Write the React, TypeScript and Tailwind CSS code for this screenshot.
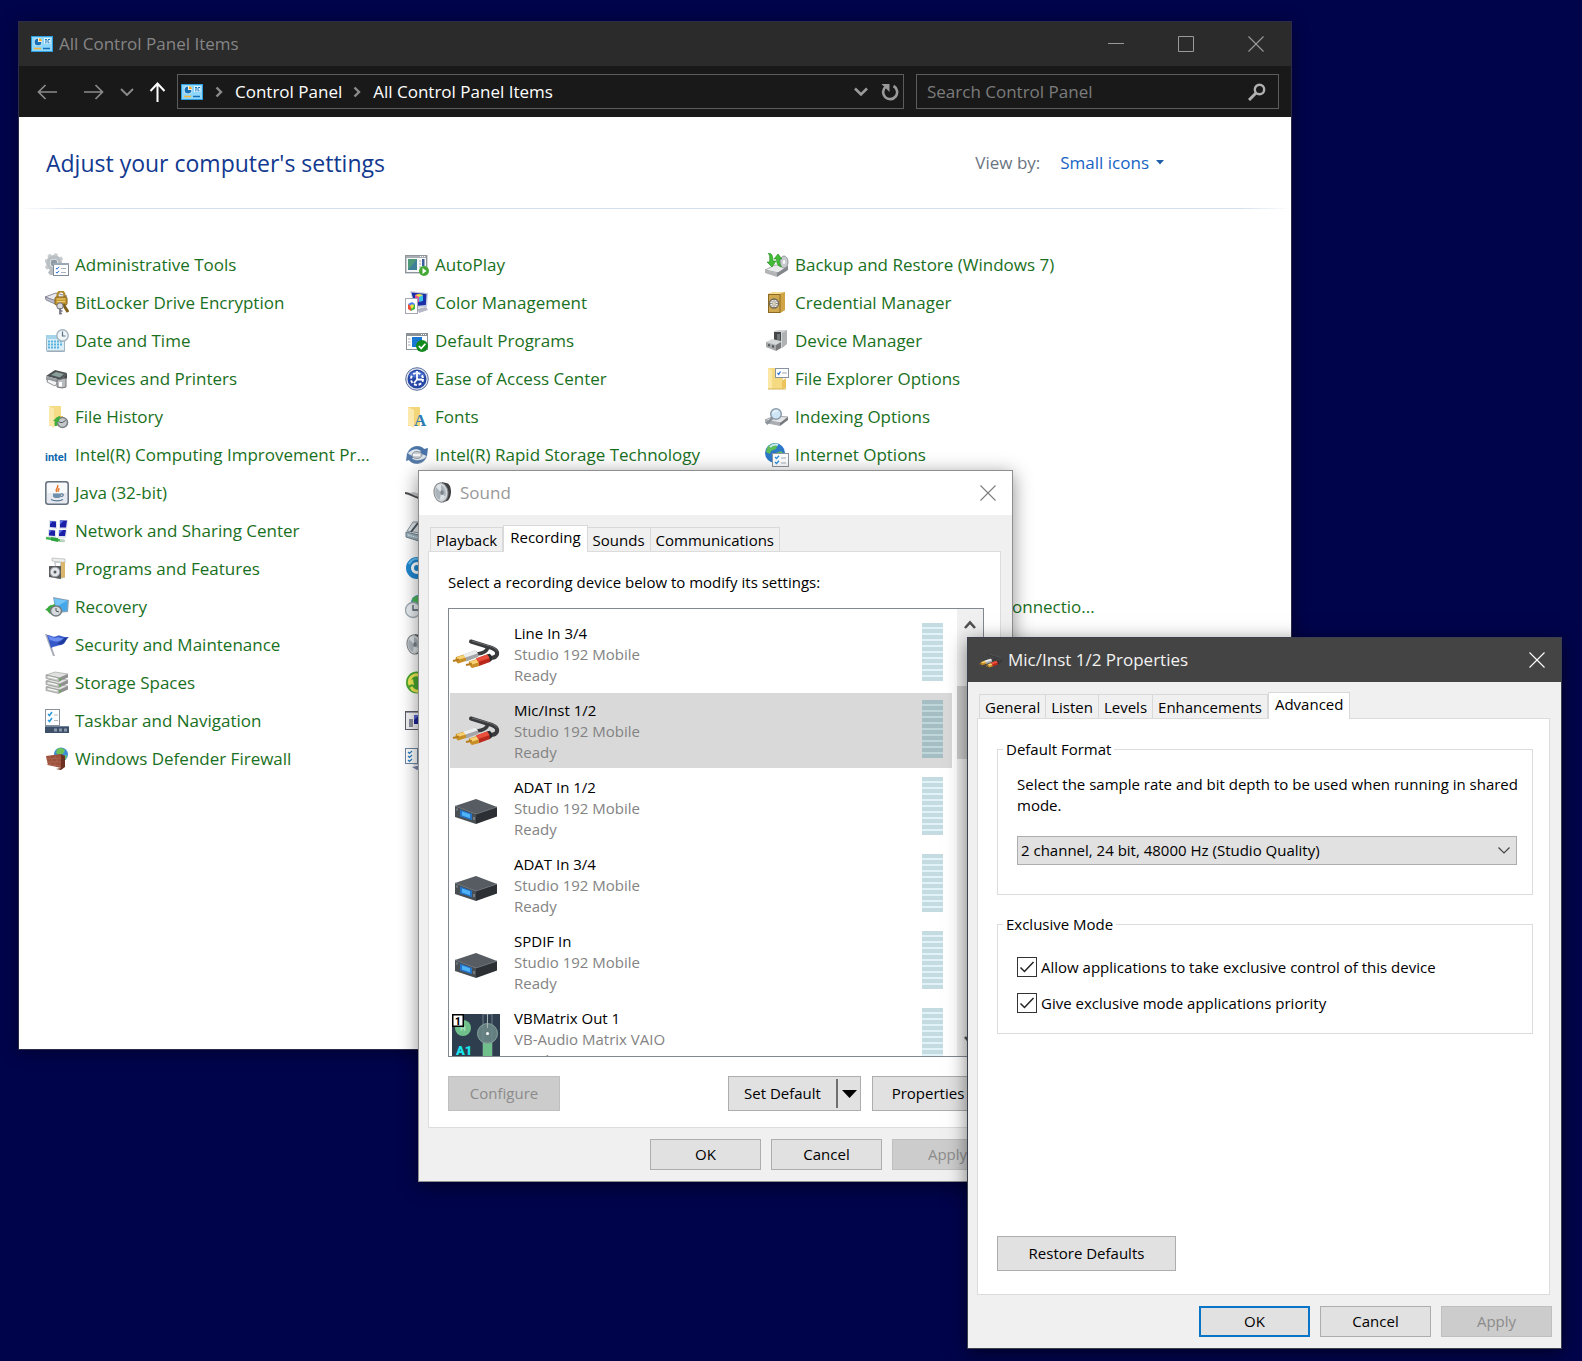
import React from 'react';
import type { ReactNode } from 'react';

/* ------------------------------------------------------------------ */
/* Icons                                                               */
/* ------------------------------------------------------------------ */

function Svg({ children, size = 24 }: { children: ReactNode; size?: number }) {
  return (
    <svg width={size} height={size} viewBox={`0 0 ${size} ${size}`} fill="none" aria-hidden="true" className="shrink-0">
      {children}
    </svg>
  );
}

const AdminTools = () => (
  <Svg>
    <circle cx="9" cy="10" r="6" stroke="#b9bfc3" strokeWidth="4" />
    <circle cx="9" cy="10" r="8.6" stroke="#c6cbce" strokeWidth="2.4" strokeDasharray="3.4 3.35" />
    <circle cx="9" cy="10" r="3.4" fill="#8f9ba4" />
    <path d="M10.500 17.500l-4-3-3.500 5 2 2.500h4z" fill="#b6bcc0" />
    <rect x="8.500" y="10.500" width="15" height="12" fill="#fff" stroke="#7f8c99" />
    <rect x="8" y="10" width="16" height="2" fill="#9aa7b4" />
    <path d="M11 15l1 1.200 2-2.400M11 19l1 1.200 2-2.400" stroke="#2e73d6" />
    <path d="M16 15.500h5M16 19.500h5" stroke="#a9b3bd" />
  </Svg>
);

const BitLocker = () => (
  <Svg>
    <path d="M0 6l11-4 11 3-9 6z" fill="#e9e9ee" stroke="#8b8b99" />
    <path d="M0 6l12 4v4L1 9z" fill="#b9bac7" stroke="#77778a" strokeWidth=".7" />
    <path d="M12.500 7V4a3.500 3.500 0 0 1 7 0v3" stroke="#b08a2a" strokeWidth="2.200" />
    <rect x="10" y="6" width="12" height="8" rx="1.500" fill="#c79a33" stroke="#7d5a14" />
    <path d="M12 8h8M12 10.500h8" stroke="#eccd75" />
    <path d="M18 13l5 8" stroke="#7d5e18" strokeWidth="3" />
    <circle cx="15" cy="15" r="3.200" fill="#d9d9dc" stroke="#6e6e78" />
    <path d="M15 17v6.500M15 20h2.500M15 22.500h2" stroke="#73737d" strokeWidth="1.700" />
  </Svg>
);

const DateTime = () => (
  <Svg>
    <rect x="1.500" y="6.500" width="18" height="16" rx="1" fill="#d9eef8" stroke="#9fb6c4" />
    <rect x="1" y="6" width="18" height="4" fill="#a4d3ea" />
    <path d="M3 12.500h14M3 15.500h14M3 18.500h11" stroke="#5ab2dc" strokeWidth="2" strokeDasharray="2 1" />
    <path d="M20 22h-18" stroke="#97a5ad" />
    <circle cx="17.500" cy="6.500" r="5.700" fill="#eef4f8" stroke="#a3b1bd" strokeWidth="1.400" />
    <path d="M17.500 2.500v4.500h3" stroke="#5c7080" strokeWidth="1.200" />
  </Svg>
);

const Printers = () => (
  <Svg>
    <path d="M1 9l9-6 12 3-6 7z" fill="#4d5154" />
    <path d="M6 8l5-3 8 2-4 3.500z" fill="#8a9f99" />
    <path d="M1 9l15 4v5L1 13z" fill="#9da1a5" />
    <path d="M16 13l6-7v5l-6 7z" fill="#44474a" />
    <path d="M3 12l10 3-3 4-8-4z" fill="#f3f4f5" stroke="#7a7d80" strokeWidth=".8" />
    <path d="M12 13l9-2v9l-4 1-5-1z" fill="#b9bcbf" stroke="#66686b" strokeWidth=".9" />
    <rect x="14" y="15" width="3" height="4.500" fill="#fff" />
  </Svg>
);

const FileHistory = () => (
  <Svg>
    <path d="M4 1h12v20H4z" fill="#f6dc86" />
    <path d="M4 1l5 3v19l-5-3z" fill="#fbe9ab" />
    <path d="M14 11h4v8h-4z" fill="#e3be55" />
    <circle cx="17.500" cy="17.500" r="5" fill="#c4c8cb" stroke="#7d8286" strokeWidth="1.600" />
    <path d="M17.500 17.500l3-2M17.500 17.500h-3" stroke="#54595e" />
    <path d="M11 21a8 8 0 0 1 4-9" stroke="#3eae3e" strokeWidth="2.600" />
    <path d="M8 16l4-4 3 5z" fill="#3eae3e" />
  </Svg>
);

const Intel = () => (
  <Svg>
    <text x="0" y="18" fontSize="11" fontWeight="700" fill="#0b67ad" fontFamily="Roboto, 'Liberation Sans', sans-serif">
      intel
    </text>
  </Svg>
);

const Java = () => (
  <Svg>
    <rect x=".8" y=".8" width="22.400" height="22.400" rx="2.500" fill="#e6eaf0" stroke="#65717f" strokeWidth="1.500" />
    <rect x="2" y="2" width="20" height="10" rx="1.500" fill="#f8f9fb" />
    <path d="M12.500 4c2 2.200-3 3.400-.800 7M14.500 7.500c-2 1-1.500 2-1 3.300" stroke="#e8782c" strokeWidth="1.500" />
    <path d="M8 12.500h8v2.500c0 1.500-1.500 2-4 2s-4-.500-4-2z" fill="#6f8fab" />
    <path d="M16 13c3-.500 3 2 0 2.500M6 18.500c3 1.800 9 1.800 12 0" stroke="#55768f" strokeWidth="1.200" />
  </Svg>
);

const Network = () => (
  <Svg>
    <path d="M4 1l8 1v8l-8-1zM14 1l9 0-1 9h-8z" fill="#dfe3ec" />
    <path d="M5 2l6 .500v6L5 8zM15 1.500h7l-1 7h-6z" fill="#1b1fa8" />
    <path d="M3 10l8 1v8l-8-1zM13 11h9l-1 8h-8z" fill="#dfe3ec" />
    <path d="M4 11l6 .500v5.500l-6-.500zM14 11h7l-1 6h-6z" fill="#1b1fa8" />
    <path d="M5 2l3 .200-3 3zM15 1.500h4l-4 4zM4 11l3 .200-3 3zM14 11h4l-4 4z" fill="#5a6ee0" />
    <path d="M1 19l18 3" stroke="#48b553" strokeWidth="2.600" />
    <path d="M6 18l7 1v4l-7-1.500z" fill="#2fa040" />
    <path d="M15 21l5 1" stroke="#c9d5cc" strokeWidth="2.600" />
  </Svg>
);

const Programs = () => (
  <Svg>
    <path d="M7 1l13 1v4l-13-2z" fill="#eceded" stroke="#aaacad" strokeWidth=".6" />
    <path d="M9 4l11 1v16l-8 1z" fill="#c9cccd" />
    <path d="M16 5h4v15l-4 1z" fill="#d9b66b" />
    <path d="M11 6h4v5h-4z" fill="#fff" />
    <path d="M4 9h12v13L4 20z" fill="#57595b" />
    <circle cx="10" cy="15" r="4.800" fill="#e3e6ea" stroke="#9b9fa4" />
    <circle cx="10" cy="15" r="1.500" fill="#57595b" />
  </Svg>
);

const Recovery = () => (
  <Svg>
    <path d="M8 2l16 3-1 12-12 1z" fill="#8ba3b4" />
    <path d="M9 3.500l13.500 2.300-.500 10-11 1z" fill="#43a7ea" />
    <path d="M9 3.500l13 2.300-11 6z" fill="#73c5f7" />
    <path d="M9 20a8 6 0 0 1-7-6l2-3 6-2v4l-4 2z" fill="#38a93b" />
    <path d="M0 15l6-5 1 7z" fill="#38a93b" />
    <ellipse cx="11" cy="16" rx="5.500" ry="5" fill="#d6dadd" stroke="#747b80" strokeWidth="1.500" />
    <path d="M11 13v3l3 1" stroke="#4c5358" />
  </Svg>
);

const Flag = () => (
  <Svg>
    <path d="M1 1l8 22" stroke="#a7acb8" strokeWidth="2" />
    <path d="M2 2c4 0 6 3 10 1 4-1.500 4 2 12 1-4 3-3 7-8 8-4 1-6 1-10 3z" fill="#3558c9" />
    <path d="M3 3c3 0 6 3 9 1.500 3-1 4 1.500 8 1-4 1-5 3-9 3-3 0-4-2-6-1z" fill="#6c8ef0" />
    <path d="M12 11c4-2 6-5 7-6l4-1c-3 3-3 7-8 7.500z" fill="#1e3a9c" />
  </Svg>
);

const Storage = () => (
  <Svg>
    {[13, 7, 1].map((y) => (
      <g key={y} transform={`translate(0 ${y - 1})`}>
        <path d="M1 4l9-3 13 2-8 4z" fill="#dfe0df" stroke="#999b99" strokeWidth=".6" />
        <path d="M1 4l13 3v3.500L1 7.500z" fill="#c9ccc9" stroke="#858885" strokeWidth=".6" />
        <path d="M14 7l9-4v3.500l-9 4z" fill="#8e918e" />
        <path d="M3 5.800l9 2" stroke="#fff" />
        <rect x="14" y="7.500" width="1.500" height="2" fill="#59b247" />
      </g>
    ))}
  </Svg>
);

const Taskbar = () => (
  <Svg>
    <rect x=".5" y=".5" width="14" height="16" fill="#fff" stroke="#8a939b" />
    <path d="M3 5l1.500 1.500L7 3M3 11l1.500 1.500L7 9" stroke="#2f9bd8" strokeWidth="1.600" />
    <path d="M9 6h4M9 11.500h4" stroke="#b4bbc1" />
    <rect x="0" y="17" width="24" height="7" fill="#3e4f68" />
    <path d="M0 17.500h24" stroke="#6e83a0" />
    <path d="M9 21h13" stroke="#8797ad" strokeWidth="3" strokeDasharray="3 2" />
  </Svg>
);

const Firewall = () => (
  <Svg>
    <circle cx="16" cy="7.500" r="7" fill="#3c8fd6" />
    <path d="M12 2c3-2 6-1 8 1l-2 4-4 1-3-2zM18 9l4-1-1 4-3 2z" fill="#6cc15a" />
    <path d="M1 9l15-2v14L3 18z" fill="#9c4f3a" />
    <path d="M16 7l4 2v11l-4 3-5-1 5-1z" fill="#6b3020" />
    <path d="M1 12l15-1M2 15l14 0M2 17.500l14 1.500M5 9v3M10 8v3.500M7 12v3M12 11.500V15M5 15v3M10 15v4" stroke="#b47360" strokeWidth=".6" />
  </Svg>
);

const AutoPlay = () => (
  <Svg>
    <rect x=".7" y="2.700" width="21" height="17" fill="#f7f8f9" stroke="#8f969b" strokeWidth="1.400" />
    <path d="M1 4h20" stroke="#a7adb2" strokeWidth="2" />
    <path d="M15 3.500h5" stroke="#fff" strokeDasharray="1 1" />
    <rect x="3" y="6" width="9" height="11" fill="#3f7f9a" />
    <path d="M3 17V6h9z" fill="#4e9a78" />
    <path d="M14 8h2M14 11h2M14 14h2" stroke="#a3a9ae" />
    <rect x="17" y="6" width="2.500" height="7" fill="#3a5f9c" />
    <circle cx="19" cy="18" r="5" fill="#44a834" />
    <path d="M17.500 15l4 3-4 3z" fill="#fff" />
  </Svg>
);

const ColorManagement = () => (
  <Svg>
    <path d="M5 0l18 2-1 14-12 1z" fill="#c9cddd" />
    <path d="M6.500 1.500l15 1.500-.700 11L10 15z" fill="#1c2fa8" />
    <path d="M10 4l4-1v8l-4-1z" fill="#e34b9d" />
    <path d="M14 3l4 1v6l-4 1z" fill="#37bfe8" />
    <path d="M10 4l4-1 4 1-4 2z" fill="#f7df3e" />
    <path d="M12 18l9-2 2 3-9 3z" fill="#b5b8c4" />
    <rect x=".5" y="7.500" width="12" height="15" fill="#fff" stroke="#a3a7b3" />
    <path d="M3 13l3 2v5l-3-2z" fill="#f04a32" />
    <path d="M6 15l4-2v5l-4 2z" fill="#3bb548" />
    <path d="M3 13l4-2 3 2-4 2z" fill="#4a7ef0" />
    <path d="M5 15l2-2 2 2-2 3z" fill="#f6e33c" />
  </Svg>
);

const DefaultPrograms = () => (
  <Svg>
    <rect x="1.500" y="4.500" width="21" height="16" fill="#fff" stroke="#8b9197" />
    <rect x="1" y="4" width="22" height="3" fill="#8b9197" />
    <path d="M16 5.500h5" stroke="#fff" strokeDasharray="1 1" />
    <path d="M3 10h2.500M3 13h2.500M3 16h2.500" stroke="#a6adb3" />
    <rect x="7" y="8" width="10" height="10" fill="#1878d2" />
    <circle cx="17" cy="17" r="6" fill="#138a1d" />
    <path d="M13.800 17l2.400 2.400 4.200-4.600" stroke="#fff" strokeWidth="1.700" />
  </Svg>
);

const EaseOfAccess = () => (
  <Svg>
    <circle cx="12" cy="12" r="11.300" fill="#dfe4ef" stroke="#5b6f9d" strokeWidth="1" />
    <circle cx="12" cy="12" r="9.500" fill="#2546a4" />
    <path d="M4 9a9 9 0 0 1 16 0c-4 2-12 2-16 0z" fill="#4a6fcd" />
    <circle cx="12" cy="12" r="6" stroke="#fff" strokeWidth="2" strokeDasharray="2.800 1.912" />
    <path d="M12 4v8.500h5M12 12.500l-3 3.500" stroke="#fff" strokeWidth="1.800" />
  </Svg>
);

const Fonts = () => (
  <Svg>
    <path d="M3 2h12v19H3z" fill="#f3d57a" />
    <path d="M3 2l6 3v18l-6-3z" fill="#fbe9ad" />
    <text x="9" y="21" fontSize="17" fontFamily="'Liberation Serif', serif" fontWeight="700" fill="#2b7bb4">
      A
    </text>
  </Svg>
);

const RapidStorage = () => (
  <Svg>
    <ellipse cx="12" cy="12" rx="9.500" ry="8.500" fill="#dde5ec" stroke="#8ba0b3" />
    <path d="M3 10C5 3 15 1 19 6l4-1-1 8-8-3 2-2C12 5 7 6 3 10z" fill="#4a74a8" />
    <path d="M21 14c-2 7-13 9-17 3l-3 1 1-8 7 4-2 1.500c4 3 10 2 14-1.500z" fill="#5479a8" />
    <ellipse cx="12" cy="12" rx="5" ry="3.500" fill="#c7ccd1" stroke="#8b959f" />
    <path d="M8 12h7" stroke="#fff" strokeWidth="1.500" />
  </Svg>
);

const Backup = () => (
  <Svg>
    <path d="M0 17l10-5 13 1-9 7z" fill="#e9eaeb" stroke="#95989b" strokeWidth=".8" />
    <path d="M0 17l12 3v4L0 20z" fill="#b2b5b8" />
    <path d="M12 20l11-7v4l-11 7z" fill="#83868a" />
    <ellipse cx="19" cy="9" rx="4" ry="6" fill="#c8ccd1" stroke="#92979c" />
    <ellipse cx="19" cy="9" rx="1.200" ry="2" fill="#fff" />
    <path d="M3 0c4 0 5 3 5 8h3l-4 6-5-5h2.500C5 5 5 2 3 0z" fill="#42bb37" stroke="#218a1d" strokeWidth=".6" />
    <path d="M13 1l4 5h-2.500c0 4 .500 6 2 8-4-1-5-4-5-8H9z" fill="#42bb37" stroke="#218a1d" strokeWidth=".6" />
  </Svg>
);

const Credential = () => (
  <Svg>
    <path d="M3 3l5-2h12v18l-5 3H3z" fill="#e2b95a" />
    <path d="M3 3h12l5-2H8z" fill="#f5dc94" />
    <path d="M15 3l5-2v18l-5 3z" fill="#d0a445" />
    <rect x="3.500" y="3.500" width="11.500" height="18" fill="#cfa84f" stroke="#8c6a24" />
    <circle cx="9" cy="12.500" r="4.500" fill="#f1efe8" stroke="#6d675b" strokeWidth="1.300" />
    <path d="M9 8v9M4.500 12.500h9M6 9.500l6 6M12 9.500l-6 6" stroke="#7d776b" strokeWidth=".8" />
    <circle cx="9" cy="12.500" r="1.500" fill="#d8d2c2" />
  </Svg>
);

const DeviceManager = () => (
  <Svg>
    <path d="M9 2l5-1h8v14l-5 4H9z" fill="#d3d5d6" />
    <path d="M17 4l5-3v14l-5 4z" fill="#b0b3b5" />
    <path d="M9 3h7v9H9z" fill="#454749" />
    <path d="M12 5h3v6h-3z" fill="#747779" />
    <path d="M1 13l6-3 9 2v7l-5 2-10-3z" fill="#d5d8d9" />
    <path d="M1 13l10 3v6L1 18z" fill="#a6a9ab" />
    <path d="M3 15l2 .600v2L3 17zM7 16l2 .600v2.400L7 18.300z" fill="#55585a" />
    <path d="M11 16l5-3v6l-5 3z" fill="#77797b" />
  </Svg>
);

const ExplorerOptions = () => (
  <Svg>
    <path d="M3 1h15v21H3z" fill="#f6da82" />
    <path d="M3 1l4 2v19H3z" fill="#fbe8a6" />
    <path d="M17 14l4-3v10l-4 1z" fill="#edc45b" />
    <path d="M3 22h18" stroke="#d7b353" />
    <rect x="10.500" y="1.500" width="13" height="9" fill="#fff" stroke="#8793a0" />
    <path d="M12.500 6l1.200 1.400L15.500 4.500" stroke="#2e73d6" strokeWidth="1.200" />
    <path d="M17 6h5" stroke="#9fa9b3" />
  </Svg>
);

const Indexing = () => (
  <Svg>
    <path d="M0 15l9-4 14 1-7 6z" fill="#e4e6e8" stroke="#8d9195" strokeWidth=".8" />
    <path d="M0 15l15 3v3L0 18z" fill="#a9adb1" />
    <path d="M15 18l8-6v3l-8 6z" fill="#75797d" />
    <circle cx="11" cy="9" r="5.300" fill="#cfe6f7" stroke="#8b9cab" strokeWidth="1.500" />
    <path d="M7.500 13l-6 6" stroke="#8b9299" strokeWidth="2.500" />
    <path d="M8 8c1-2 3-2.500 5-2" stroke="#fff" />
  </Svg>
);

const Internet = () => (
  <Svg>
    <circle cx="10" cy="10" r="10" fill="#2c79c9" />
    <path d="M2 5c3-5 8-5 11-4l-2 5-5 2-1 3-4-2zM11 10l5-2 3 3-3 7-5-2z" fill="#5fbd58" />
    <path d="M5 4c2-2 5-3 8-2" stroke="#c8e8fa" strokeWidth="2" />
    <rect x="7.500" y="10.500" width="16" height="13" fill="#fff" stroke="#8d96a0" />
    <path d="M10 14l1.500 1.500L14 12.800M10 19l1.500 1.500L14 17.800" stroke="#2f8fd8" strokeWidth="1.400" />
    <path d="M16 15h5M16 20h5" stroke="#a6afb8" />
  </Svg>
);

const Pen = () => (
  <Svg>
    <path d="M0 13l14 5 8-2-13-5z" fill="#c7c9cc" />
    <path d="M0 12c5 0 8 4 14 5" stroke="#4c4f53" strokeWidth="1.800" />
  </Svg>
);

const Phone = () => (
  <Svg>
    <path d="M2 12l6-9h14v12z" fill="#dfe6ea" stroke="#8694a0" />
    <path d="M6 13l7-9" stroke="#4d5961" strokeWidth="2" />
    <path d="M1 13l13 3v6L1 18z" fill="#9eb4bf" stroke="#6b7f8b" />
    <path d="M3 16l11 3" stroke="#e8f1f4" strokeDasharray="1.500 1" />
  </Svg>
);

const QuickTime = () => (
  <Svg>
    <circle cx="12" cy="11" r="8.500" stroke="#2088d0" strokeWidth="5" fill="#fff" />
    <path d="M4 7c2-4 6-6 10-5" stroke="#66bdf0" strokeWidth="2" />
    <circle cx="12" cy="11" r="3" fill="#2088d0" />
  </Svg>
);

const Region = () => (
  <Svg>
    <circle cx="14" cy="8" r="8" fill="#2b7fc3" />
    <path d="M7 4c3-4 8-4 11-2l-4 6-6 1z" fill="#4fb75b" />
    <circle cx="8" cy="15" r="7.500" fill="#e7ecf0" stroke="#a0abb5" strokeWidth="1.300" />
    <path d="M8 10v5h5" stroke="#4e5b66" strokeWidth="1.300" />
  </Svg>
);

const Speaker = () => (
  <Svg>
    <path d="M10 1l6 1.500c4 3 4 13 0 17l-5 2z" fill="#3e4144" />
    <ellipse cx="9" cy="11.500" rx="7" ry="9.700" fill="#d3d7da" stroke="#7d8184" transform="rotate(-8 9 11.500)" />
    <ellipse cx="8.500" cy="11.500" rx="5.300" ry="7.600" fill="#aab4ba" transform="rotate(-8 8.500 11.500)" />
    <path d="M9 11.500L4 6c1-2 3-3 5-2zM9 11.500l4 4c-1 3-3 4-5 3z" fill="#dde3e6" />
    <ellipse cx="10" cy="11.500" rx="1.700" ry="2.500" fill="#7b8489" />
  </Svg>
);

const Sync = () => (
  <Svg>
    <circle cx="12" cy="11.500" r="11" fill="#4aa82e" />
    <path d="M5 14a7 7 0 0 1 13-6M19 10a7 7 0 0 1-13 6" stroke="#f2ea5b" strokeWidth="3" />
    <path d="M2 12l6-4 1 6z" fill="#f2ea5b" />
  </Svg>
);

const Troubleshoot = () => (
  <Svg>
    <rect x=".5" y="2.500" width="22" height="18" fill="#f3f3f6" stroke="#5b5e66" />
    <path d="M1 3.500h21" stroke="#9da0aa" />
    <rect x="4" y="10" width="4" height="8" fill="#8d919c" />
    <path d="M9 6h10v9H9z" fill="#1c2593" />
    <path d="M9 6h6l-6 5z" fill="#5764cf" />
  </Svg>
);

const WorkFolders = () => (
  <Svg>
    <rect x="9" y="5" width="14" height="12" fill="#2538a5" stroke="#a5acc8" />
    <path d="M7 20l9-2 4 2-8 3z" fill="#7d86ac" />
    <rect x=".5" y="1.500" width="12" height="15" fill="#fff" stroke="#6e86a2" />
    <path d="M3 5l1.500 1.500L7 4M3 9l1.500 1.500L7 8M3 13l1.500 1.500L7 12" stroke="#2e7fc4" strokeWidth="1.200" />
  </Svg>
);

const PanelIcon = () => (
  <svg width="22" height="16" viewBox="0 0 22 16" aria-hidden="true" className="shrink-0">
    <rect width="22" height="16" fill="#2d9fe0" />
    <rect x="1" y="1" width="20" height="14" fill="#8fd6fb" />
    <circle cx="7" cy="6" r="4" fill="#fff" />
    <path d="M7 6V2.500A3.500 3.500 0 1 0 10.500 6z" fill="#1670b8" />
    <path d="M7.800 5.200V2.200a3 3 0 0 1 3 3z" fill="#f5a623" />
    <rect x="13" y="2" width="6.500" height="6" fill="#dff3ff" />
    <path d="M14 3.500h2M17 3.500h2M14 5h4M14 6.800h1.500M16.500 6.800h2" stroke="#1b79c0" strokeWidth="1" />
    <path d="M3 12.500h7" stroke="#f5b63e" strokeWidth="1.500" />
    <path d="M12 12.500h7" stroke="#1670b8" strokeWidth="1.500" />
  </svg>
);

/* A pair of RCA plugs, white and red, on a looped lead. */
function CableArt() {
  return (
    <g fill="none">
      <path d="M19 12.500l16 5c7 1.500 11 4 10 8-1 3-4 3.500-7 3.500" stroke="#393b3d" strokeWidth="4" strokeLinecap="round" />
      <path d="M36 18c-1 4-4 6.500-11 7" stroke="#393b3d" strokeWidth="3.600" />
      <path d="M20 12l16 4.600c5 1.200 8 3 9 5" stroke="#6b6e70" strokeWidth="1" />
      <path d="M4 28l8-2.500c2 .500 3.500 5.500 2 6.500l-8 2.500c-2-1-3-5-2-6.500z" fill="#c98f27" />
      <path d="M5 28l7-2c1 .500 1.700 1.600 2 2.600L5.500 31z" fill="#f6d272" />
      <path d="M1 32l6-1.500" stroke="#b67d1c" strokeWidth="2" />
      <path d="M11 25.500l12-4c2 0 4.500 4.500 3 6.500l-12 4.500c1-2-1-6-3-7z" fill="#a3a5a9" />
      <path d="M11 25.500l12-4c1.200.300 2 1.500 2.500 3L13.500 28.500z" fill="#eceded" />
      <path d="M17 32.500l8-2.500c2 1 3.500 5.500 2.500 7L20 39c-2-1-3.500-5-3-6.500z" fill="#c98f27" />
      <path d="M18 32.500l7-2c1 .500 1.800 1.800 2 2.800L19 36z" fill="#f6d272" />
      <path d="M14 36l6-1.300" stroke="#b67d1c" strokeWidth="2" />
      <path d="M24 29.500l11-4c3 0 5 6 3 7.500l-11 4c1-2-1-6-3-7.500z" fill="#b9281a" />
      <path d="M24 29.500l11-4c1.500.500 2.500 1.500 3 3.500l-12 4z" fill="#e94f3a" />
      <path d="M35 25.500l2.500-.800c2 .500 3.500 5.500 2 7l-2 1c1-2 0-5-2.500-7.200z" fill="#2b2c2d" />
    </g>
  );
}

const CableIcon = () => (
  <Svg size={48}>
    <CableArt />
  </Svg>
);

const SmallCableIcon = () => (
  <svg width="24" height="24" viewBox="0 0 48 48" aria-hidden="true" className="shrink-0">
    <CableArt />
  </svg>
);

const BoxIcon = () => (
  <Svg size={48}>
    <path d="M3 23l21-7 21 8-21 7z" fill="#565c61" />
    <path d="M3 23l21 8v10L3 34z" fill="#4a4f54" />
    <path d="M24 31l21-7v9.500L24 41z" fill="#2c3034" />
    <path d="M3 23l21 8 21-7" stroke="#687077" strokeWidth=".8" />
    <path d="M8 26.500l12 4.200v6.500L8 33.500z" fill="#2573c4" />
    <path d="M10 28.500l8 2.700v4l-8-2.700z" fill="#4fb3f7" />
    <path d="M5 25.500v2M22 34v3" stroke="#a3a9af" />
  </Svg>
);

const MatrixIcon = () => (
  <Svg size={48}>
    <rect width="48" height="48" fill="#2f3e4e" />
    <circle cx="11" cy="14" r="8" fill="#6fc08b" />
    <text x="8" y="17" fontSize="8" fontWeight="700" fill="#a9e3bd" fontFamily="Roboto, sans-serif">
      H
    </text>
    <rect x="31" y="0" width="9" height="48" stroke="#6d7c88" />
    <rect x="31" y="28" width="9" height="20" fill="#6fc08b" />
    <circle cx="35.500" cy="19.500" r="10" fill="#6f8b8b" fillOpacity=".85" stroke="#85a39c" />
    <path d="M35.500 0v14" stroke="#a8b5b8" />
    <circle cx="35.500" cy="19.500" r="1.500" fill="#fff" />
    <rect x=".75" y=".75" width="10.500" height="11.500" fill="#fff" stroke="#000" strokeWidth="1.500" />
    <text x="3" y="10.500" fontSize="10" fontWeight="900" fill="#000" fontFamily="Roboto, sans-serif">
      1
    </text>
    <text x="4" y="41" fontSize="13" fontWeight="900" fill="#19e6ee" fontFamily="Roboto, sans-serif">
      A1
    </text>
  </Svg>
);

const CloseGlyph = () => (
  <svg width="16" height="16" viewBox="0 0 16 16" fill="none" stroke="currentColor" strokeWidth="1.100" aria-hidden="true">
    <path d="M.5.5l15 15M15.500.5l-15 15" />
  </svg>
);

const Crumb = () => (
  <svg width="9" height="12" viewBox="0 0 9 12" fill="none" stroke="#8c8c8c" strokeWidth="2.400" aria-hidden="true" className="shrink-0">
    <path d="M1.500 1.500L6 6l-4.500 4.500" />
  </svg>
);

/* ------------------------------------------------------------------ */
/* Control Panel window                                                */
/* ------------------------------------------------------------------ */

type Item = { icon: () => React.JSX.Element; label: string; iconOnly?: boolean };

const columns: Item[][] = [
  [
    { icon: AdminTools, label: 'Administrative Tools' },
    { icon: BitLocker, label: 'BitLocker Drive Encryption' },
    { icon: DateTime, label: 'Date and Time' },
    { icon: Printers, label: 'Devices and Printers' },
    { icon: FileHistory, label: 'File History' },
    { icon: Intel, label: 'Intel(R) Computing Improvement Pr...' },
    { icon: Java, label: 'Java (32-bit)' },
    { icon: Network, label: 'Network and Sharing Center' },
    { icon: Programs, label: 'Programs and Features' },
    { icon: Recovery, label: 'Recovery' },
    { icon: Flag, label: 'Security and Maintenance' },
    { icon: Storage, label: 'Storage Spaces' },
    { icon: Taskbar, label: 'Taskbar and Navigation' },
    { icon: Firewall, label: 'Windows Defender Firewall' },
  ],
  [
    { icon: AutoPlay, label: 'AutoPlay' },
    { icon: ColorManagement, label: 'Color Management' },
    { icon: DefaultPrograms, label: 'Default Programs' },
    { icon: EaseOfAccess, label: 'Ease of Access Center' },
    { icon: Fonts, label: 'Fonts' },
    { icon: RapidStorage, label: 'Intel(R) Rapid Storage Technology' },
    { icon: Pen, label: 'Keyboard', iconOnly: true },
    { icon: Phone, label: 'Phone and Modem', iconOnly: true },
    { icon: QuickTime, label: 'QuickTime', iconOnly: true },
    { icon: Region, label: 'Region', iconOnly: true },
    { icon: Speaker, label: 'Sound', iconOnly: true },
    { icon: Sync, label: 'Sync Center', iconOnly: true },
    { icon: Troubleshoot, label: 'Troubleshooting', iconOnly: true },
    { icon: WorkFolders, label: 'Work Folders', iconOnly: true },
  ],
  [
    { icon: Backup, label: 'Backup and Restore (Windows 7)' },
    { icon: Credential, label: 'Credential Manager' },
    { icon: DeviceManager, label: 'Device Manager' },
    { icon: ExplorerOptions, label: 'File Explorer Options' },
    { icon: Indexing, label: 'Indexing Options' },
    { icon: Internet, label: 'Internet Options' },
  ],
];

function ItemLink({ item }: { item: Item }) {
  const Icon = item.icon;
  return (
    <li>
      <a href="#" aria-label={item.iconOnly ? item.label : undefined} className="flex h-[38px] items-center gap-[6px] whitespace-nowrap text-[17px] text-[#1a7022]">
        <Icon />
        {!item.iconOnly && <span>{item.label}</span>}
      </a>
    </li>
  );
}

function ControlPanelWindow() {
  return (
    <section aria-label="All Control Panel Items" className="absolute left-[18px] top-[21px] w-[1274px] border border-[#2c2c4a] bg-white shadow-[0_2px_16px_rgba(0,0,0,0.4)]">
      <header className="flex h-[44px] items-center gap-[6px] bg-[#2b2b2b] pl-3 text-[17px] text-[#858585]">
        <PanelIcon />
        <h1>All Control Panel Items</h1>
        <div className="ml-auto flex items-center gap-[54px] pr-[27px] text-[#9a9a9a]">
          <button type="button" aria-label="Minimize" className="flex">
            <svg width="16" height="16" viewBox="0 0 16 16" stroke="currentColor" aria-hidden="true">
              <path d="M0 7.500h16" />
            </svg>
          </button>
          <button type="button" aria-label="Maximize" className="flex">
            <svg width="16" height="16" viewBox="0 0 16 16" stroke="currentColor" fill="none" aria-hidden="true">
              <path d="M.5.5h15v15H.5z" />
            </svg>
          </button>
          <button type="button" aria-label="Close" className="flex">
            <CloseGlyph />
          </button>
        </div>
      </header>

      <div className="flex h-[51px] items-center bg-[#191919] pl-[18px] pr-3 text-[17px] text-white">
        <button type="button" aria-label="Back" className="flex text-[#8a8a8a]">
          <svg width="20" height="16" viewBox="0 0 20 16" fill="none" stroke="currentColor" strokeWidth="1.700" aria-hidden="true">
            <path d="M20 8H1.500M8.500 1L1.500 8l7 7" />
          </svg>
        </button>
        <button type="button" aria-label="Forward" className="ml-[27px] flex text-[#8a8a8a]">
          <svg width="20" height="16" viewBox="0 0 20 16" fill="none" stroke="currentColor" strokeWidth="1.700" aria-hidden="true">
            <path d="M0 8h18.500M11.500 1l7 7-7 7" />
          </svg>
        </button>
        <button type="button" aria-label="Recent locations" className="ml-4 flex text-[#8a8a8a]">
          <svg width="14" height="8" viewBox="0 0 14 8" fill="none" stroke="currentColor" strokeWidth="1.900" aria-hidden="true">
            <path d="M1 1l6 6 6-6" />
          </svg>
        </button>
        <button type="button" aria-label="Up" className="ml-[15px] flex">
          <svg width="17" height="20" viewBox="0 0 17 20" fill="none" stroke="currentColor" strokeWidth="2" aria-hidden="true">
            <path d="M8.500 20V2M1.500 9l7-7.500 7 7.500" />
          </svg>
        </button>
        <nav aria-label="Address" className="ml-[11px] flex h-[35px] min-w-0 flex-1 items-center border border-[#5c5c5c] pl-[3px] pr-1">
          <PanelIcon />
          <span className="ml-3"><Crumb /></span>
          <a href="#" className="ml-[11px]">Control Panel</a>
          <span className="ml-[11px]"><Crumb /></span>
          <a href="#" className="ml-[11px]">All Control Panel Items</a>
          <button type="button" aria-label="Previous locations" className="ml-auto flex text-[#9a9a9a]">
            <svg width="14" height="10" viewBox="0 0 14 10" fill="none" stroke="currentColor" strokeWidth="2.600" aria-hidden="true">
              <path d="M1 1.500l6 6 6-6" />
            </svg>
          </button>
          <button type="button" aria-label="Refresh" className="ml-[13px] flex text-[#9a9a9a]">
            <svg width="18" height="18" viewBox="0 0 18 18" fill="none" aria-hidden="true">
              <path d="M12.500 3a7 7 0 1 1-7.500.500" stroke="currentColor" strokeWidth="2.600" />
              <path d="M.5 1H8.500v8z" fill="currentColor" />
            </svg>
          </button>
        </nav>
        <label className="ml-3 flex h-[35px] w-[363px] items-center border border-[#5c5c5c] pl-[10px] pr-3">
          <input type="search" aria-label="Search Control Panel" placeholder="Search Control Panel" className="min-w-0 flex-1 bg-transparent text-[17px] text-white outline-none placeholder:text-[#7c7c7c]" />
          <svg width="18" height="18" viewBox="0 0 18 18" fill="none" stroke="#b0b0b0" aria-hidden="true">
            <circle cx="11.500" cy="6.500" r="4.700" strokeWidth="2.400" />
            <path d="M8 10l-7 7" strokeWidth="3" />
          </svg>
        </label>
      </div>

      <main className="min-h-[932px]">
        <div className="flex h-[91px] items-center pl-[27px] pr-[127px]">
          <h2 className="pt-[2px] text-[23px] text-[#12398f]">Adjust your computer's settings</h2>
          <p className="ml-auto text-[17px] text-[#6b7480]">View by:</p>
          <button type="button" className="ml-5 flex items-center gap-[7px] text-[17px] text-[#1663c4]">
            Small icons
            <svg width="8" height="5" viewBox="0 0 8 5" aria-hidden="true">
              <path d="M0 0h8L4 4.500z" fill="#1f5ea8" />
            </svg>
          </button>
        </div>
        <div className="h-px bg-[linear-gradient(to_right,#ffffff,#d3dfec_4%,#d3dfec_96%,#ffffff)]" />
        <div className="grid grid-cols-[repeat(3,360px)] pl-[26px] pt-[37px]">
          {columns.map((column, i) => (
            <ul key={i}>
              {column.map((item) => (
                <ItemLink key={item.label} item={item} />
              ))}
              {i === 2 && (
                <li className="mt-[114px]">
                  <a href="#" className="flex h-[38px] items-center whitespace-nowrap pl-[34px] text-[17px] text-[#1a7022]">
                    RemoteApp and Desktop Connectio...
                  </a>
                </li>
              )}
            </ul>
          ))}
        </div>
      </main>
    </section>
  );
}

/* ------------------------------------------------------------------ */
/* Dialog parts                                                        */
/* ------------------------------------------------------------------ */

function Tabs({ names, active }: { names: string[]; active: string }) {
  return (
    <div role="tablist" className="flex items-end pl-[11px] pt-[10px]">
      {names.map((name) =>
        name === active ? (
          <button key={name} type="button" role="tab" aria-selected="true" className="relative -mb-px h-[27px] border border-b-0 border-[#d9d9d9] bg-white px-[6px] pb-1 leading-5">
            {name}
          </button>
        ) : (
          <button key={name} type="button" role="tab" aria-selected="false" className="h-[24px] border border-b-0 border-l-0 border-[#d9d9d9] bg-[#f0f0f0] px-[5px] leading-5 first:border-l">
            {name}
          </button>
        ),
      )}
    </div>
  );
}

type ButtonKind = 'normal' | 'default' | 'disabled';

function DialogButton({ children, kind = 'normal', size }: { children: ReactNode; kind?: ButtonKind; size: string }) {
  const look = {
    normal: 'border border-[#adadad] bg-[#e1e1e1] text-black',
    default: 'border-2 border-[#0a74c6] bg-[#e1e1e1] text-black',
    disabled: 'border border-[#bfbfbf] bg-[#cccccc] text-[#8b8b8b]',
  }[kind];
  return (
    <button type="button" disabled={kind === 'disabled'} className={`${look} ${size}`}>
      {children}
    </button>
  );
}

function Footer({ primary }: { primary?: boolean }) {
  return (
    <footer className="flex justify-end gap-[10px] px-[9px] pb-[11px] pt-[11px]">
      <DialogButton kind={primary ? 'default' : 'normal'} size="h-[31px] w-[111px]">OK</DialogButton>
      <DialogButton size="h-[31px] w-[111px]">Cancel</DialogButton>
      <DialogButton kind="disabled" size="h-[31px] w-[111px]">Apply</DialogButton>
    </footer>
  );
}

/* ------------------------------------------------------------------ */
/* Sound dialog                                                        */
/* ------------------------------------------------------------------ */

const devices = [
  { name: 'Line In 3/4', device: 'Studio 192 Mobile', icon: CableIcon },
  { name: 'Mic/Inst 1/2', device: 'Studio 192 Mobile', icon: CableIcon, selected: true },
  { name: 'ADAT In 1/2', device: 'Studio 192 Mobile', icon: BoxIcon },
  { name: 'ADAT In 3/4', device: 'Studio 192 Mobile', icon: BoxIcon },
  { name: 'SPDIF In', device: 'Studio 192 Mobile', icon: BoxIcon },
  { name: 'VBMatrix Out 1', device: 'VB-Audio Matrix VAIO', icon: MatrixIcon },
];

function Meter({ selected }: { selected?: boolean }) {
  return (
    <div className={`mb-[3px] ml-auto flex w-[21px] flex-col gap-[2px] ${selected ? 'bg-[#bfd6da]' : 'bg-[#e1f3f8]'}`}>
      {Array.from({ length: 10 }, (_, i) => (
        <span key={i} className={`h-1 ${selected ? 'bg-[#a5bec4]' : 'bg-[#c3dbe1]'}`} />
      ))}
    </div>
  );
}

function SoundDialog() {
  return (
    <section aria-label="Sound" className="absolute left-[418px] top-[470px] w-[595px] border border-[#8f8f8f] bg-[#f0f0f0] text-[15px] text-black shadow-[0_4px_18px_rgba(0,0,0,0.45)]">
      <header className="flex h-[44px] items-center gap-[4px] bg-white pl-[13px] pr-[16px] text-[17px] text-[#999999]">
        <Speaker />
        <h2>Sound</h2>
        <button type="button" aria-label="Close" className="ml-auto flex text-[#7d7d7d]">
          <CloseGlyph />
        </button>
      </header>
      <Tabs names={['Playback', 'Recording', 'Sounds', 'Communications']} active="Recording" />
      <div className="ml-[9px] mr-[11px] border border-[#dcdcdc] bg-white pb-4 pl-[19px] pr-[16px] pt-5">
        <p className="leading-5">Select a recording device below to modify its settings:</p>
        <div className="mt-4 flex h-[449px] border border-[#828790]">
          <ul className="flex min-w-0 flex-1 flex-col gap-[2px] overflow-hidden pl-px pr-[5px] pt-[7px]">
            {devices.map((d) => {
              const Icon = d.icon;
              return (
                <li key={d.name} className={`flex h-[75px] shrink-0 items-center pl-[2px] pr-[9px] ${d.selected ? 'bg-[#d9d9d9]' : ''}`}>
                  <span className="shrink-0 pb-[2px]">
                    <Icon />
                  </span>
                  <div className="ml-[14px] pt-[2px] leading-[21px] text-[#838383]">
                    <p className="text-black">{d.name}</p>
                    <p>{d.device}</p>
                    <p>Ready</p>
                  </div>
                  <Meter selected={d.selected} />
                </li>
              );
            })}
          </ul>
          <div className="flex w-[26px] flex-col items-center bg-[#f0f0f0] text-[#505050]">
            <svg width="12" height="9" viewBox="0 0 12 9" fill="none" stroke="currentColor" strokeWidth="2.600" aria-hidden="true" className="mt-[11px]">
              <path d="M1 8l5-5.500L11 8" />
            </svg>
            <div className="mt-[57px] h-[73px] w-full bg-[#cdcdcd]" />
            <svg width="12" height="9" viewBox="0 0 12 9" fill="none" stroke="currentColor" strokeWidth="2.600" aria-hidden="true" className="mb-[11px] mt-auto">
              <path d="M1 1l5 5.500L11 1" />
            </svg>
          </div>
        </div>
        <div className="mt-[19px] flex items-center">
          <DialogButton kind="disabled" size="h-[35px] w-[112px]">Configure</DialogButton>
          <div className="ml-auto flex h-[35px] w-[133px] items-center border border-[#adadad] bg-[#e1e1e1]">
            <button type="button" className="flex-1">Set Default</button>
            <span className="h-[29px] w-[2px] bg-[#6f6f6f]" />
            <button type="button" aria-label="More default options" className="flex w-[22px] justify-center">
              <svg width="15" height="8" viewBox="0 0 15 8" aria-hidden="true">
                <path d="M0 0h15L7.500 8z" fill="#000" />
              </svg>
            </button>
          </div>
          <div className="ml-[11px] flex">
            <DialogButton size="h-[35px] w-[112px]">Properties</DialogButton>
          </div>
        </div>
      </div>
      <Footer />
    </section>
  );
}

/* ------------------------------------------------------------------ */
/* Properties dialog                                                   */
/* ------------------------------------------------------------------ */

function Tick({ children }: { children: ReactNode }) {
  return (
    <label className="relative flex h-5 items-center gap-1">
      <input type="checkbox" defaultChecked className="peer h-5 w-5 shrink-0 appearance-none border border-[#333333] bg-white" />
      <svg width="20" height="20" viewBox="0 0 20 20" fill="none" stroke="#222" strokeWidth="1.500" aria-hidden="true" className="pointer-events-none invisible absolute left-0 top-0 peer-checked:visible">
        <path d="M3.500 10.500l4 4 9-9.500" />
      </svg>
      <span>{children}</span>
    </label>
  );
}

function PropertiesDialog() {
  return (
    <section aria-label="Mic/Inst 1/2 Properties" className="absolute left-[967px] top-[637px] w-[595px] border border-[#3c3f4c] bg-[#f0f0f0] text-[15px] text-black shadow-[0_4px_18px_rgba(0,0,0,0.5)]">
      <header className="flex h-[44px] items-center gap-[5px] bg-[#444444] pl-[11px] pr-[16px] text-[17px] text-[#f2f2f2]">
        <SmallCableIcon />
        <h2>Mic/Inst 1/2 Properties</h2>
        <button type="button" aria-label="Close" className="ml-auto flex text-white">
          <CloseGlyph />
        </button>
      </header>
      <Tabs names={['General', 'Listen', 'Levels', 'Enhancements', 'Advanced']} active="Advanced" />
      <div className="ml-[9px] mr-[11px] flex min-h-[577px] flex-col border border-[#dcdcdc] bg-white pb-[23px] pl-[19px] pr-[16px] pt-5">
        <fieldset className="border border-[#dcdcdc] pb-[29px] pl-[19px] pr-[7px]">
          <legend className="-ml-[14px] px-[3px] leading-[21px]">Default Format</legend>
          <p className="mt-[14px] leading-[21px]">Select the sample rate and bit depth to be used when running in shared mode.</p>
          <div className="relative mr-2 mt-5">
            <select aria-label="Default format" className="block h-[29px] w-full appearance-none border border-[#adadad] bg-[#e1e1e1] pl-[3px] pr-8">
              <option>2 channel, 24 bit, 48000 Hz (Studio Quality)</option>
            </select>
            <svg width="12" height="7" viewBox="0 0 12 7" fill="none" stroke="#444" strokeWidth="1.200" aria-hidden="true" className="pointer-events-none absolute right-[7px] top-[11px]">
              <path d="M.5.5L6 6 11.500.5" />
            </svg>
          </div>
        </fieldset>
        <fieldset className="mt-[19px] border border-[#dcdcdc] pb-5 pl-[19px] pr-[7px]">
          <legend className="-ml-[14px] px-[3px] leading-[21px]">Exclusive Mode</legend>
          <div className="flex flex-col gap-4 pt-[22px]">
            <Tick>Allow applications to take exclusive control of this device</Tick>
            <Tick>Give exclusive mode applications priority</Tick>
          </div>
        </fieldset>
        <div className="mt-auto flex">
          <DialogButton size="h-[35px] w-[179px]">Restore Defaults</DialogButton>
        </div>
      </div>
      <Footer primary />
    </section>
  );
}

export default function App() {
  return (
    <div className="relative min-h-screen w-full overflow-hidden bg-[#00044b] font-['Open_Sans','Noto_Sans',sans-serif]">
      <ControlPanelWindow />
      <SoundDialog />
      <PropertiesDialog />
    </div>
  );
}
